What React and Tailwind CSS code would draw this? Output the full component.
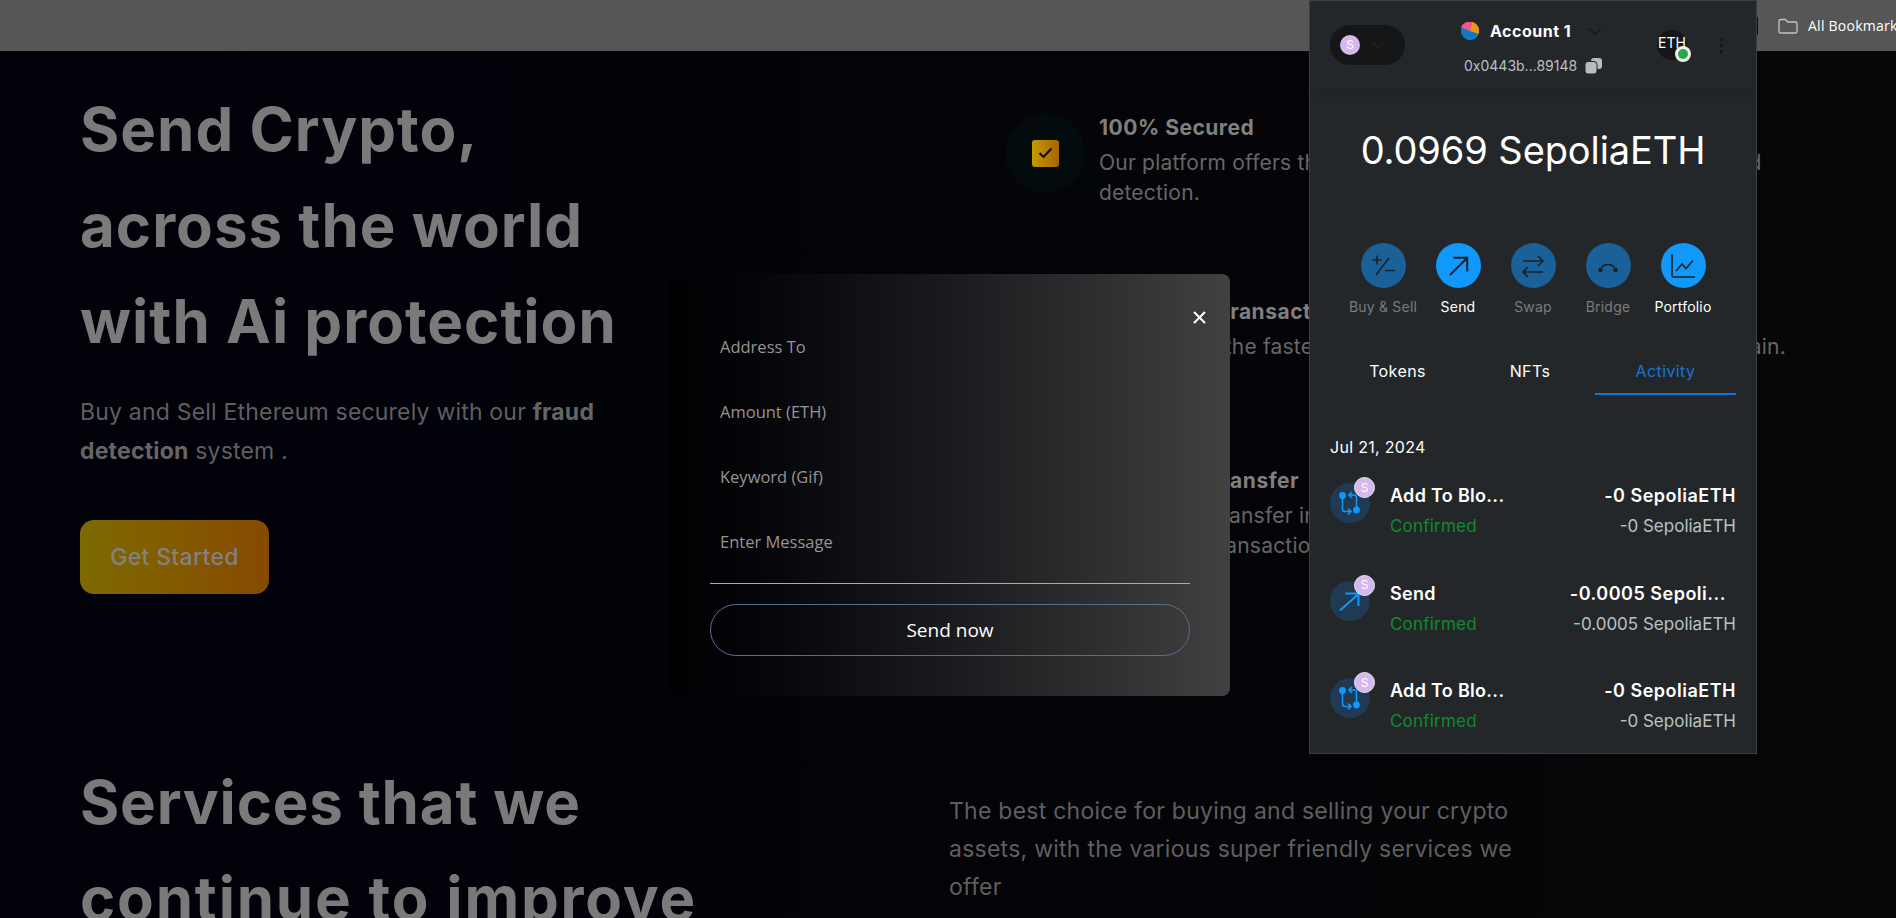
import React from "react";

const Chevron = ({ color, size = 16 }) => (
  <svg width={size} height={size} viewBox="0 0 16 16" fill="none" stroke={color} strokeWidth="1.3">
    <path d="M2 5l6 6 6-6" />
  </svg>
);

const ActionIcon = ({ kind }) => {
  const s = { fill: "none", stroke: "#1c2124", strokeWidth: 1.6 };
  return (
    <svg width="26" height="26" viewBox="0 0 26 26">
      {kind === "buy" && (
        <g {...s}>
          <path d="M2.500 7h9M7 2.500v9M6 22L19 5M15 17.500h10" />
        </g>
      )}
      {kind === "send" && (
        <g {...s} strokeWidth="2">
          <path d="M5 22L22 5M8.500 4.800H22.200V18.500" />
        </g>
      )}
      {kind === "swap" && (
        <g {...s}>
          <path d="M3 8h20M18 3l5 5-5 5M23 19H3M8 14l-5 5 5 5" />
        </g>
      )}
      {kind === "bridge" && (
        <g>
          <path d="M6.500 14.500a7.500 6 0 0 1 13 0" {...s} />
          <circle cx="5.500" cy="17" r="2.300" fill="#1c2124" />
          <circle cx="20.500" cy="17" r="2.300" fill="#1c2124" />
        </g>
      )}
      {kind === "chart" && (
        <g {...s}>
          <path d="M2 1v21.500a1.500 1.500 0 0 0 1.500 1.500H25M6 18l6-7 4 4.500 7-8" />
        </g>
      )}
    </svg>
  );
};

const ContractIcon = () => (
  <svg width="24" height="24" viewBox="0 0 24 24" fill="none" stroke="#1098fc" strokeWidth="1.600">
    <circle cx="4.500" cy="4.500" r="2.600" fill="#1098fc" />
    <circle cx="18.500" cy="19" r="2.600" fill="#1098fc" />
    <path d="M4.500 6v12a2.500 2.500 0 0 0 2.500 2.500h5M10 17.500l3 3-3 3M18.500 17V6.500a2.500 2.500 0 0 0-2.500-2.500h-5M14 1l-3 3 3 3" />
  </svg>
);

const SendIcon = () => (
  <svg width="24" height="24" viewBox="0 0 24 24" fill="none" stroke="#1098fc" strokeWidth="2">
    <path d="M2 21.500L20.500 5M7.500 4.500H20.500V17" />
  </svg>
);

const actions = [
  { kind: "buy", label: "Buy & Sell", on: false },
  { kind: "send", label: "Send", on: true },
  { kind: "swap", label: "Swap", on: false },
  { kind: "bridge", label: "Bridge", on: false },
  { kind: "chart", label: "Portfolio", on: true },
];

const activity = [
  { title: "Add To Blo...", amount: "-0 SepoliaETH", sub: "-0 SepoliaETH", icon: <ContractIcon />, pad: "" },
  { title: "Send", amount: "-0.0005 Sepoli...", sub: "-0.0005 SepoliaETH", icon: <SendIcon />, pad: "pr-[10px]" },
  { title: "Add To Blo...", amount: "-0 SepoliaETH", sub: "-0 SepoliaETH", icon: <ContractIcon />, pad: "" },
];

const Feature = ({ title, children }) => (
  <div className="flex gap-[14px]">
    <div className="w-[80px] h-[80px] shrink-0 rounded-full bg-[#040b0c] flex items-center justify-center">
      <div className="w-[27px] h-[27px] rounded-[3px] bg-gradient-to-r from-[#c39b00] to-[#a86400] flex items-center justify-center">
        <svg width="15" height="12" viewBox="0 0 15 12" fill="none" stroke="#14110a" strokeWidth="2.200">
          <path d="M1.500 6l4 4 8-8.500" />
        </svg>
      </div>
    </div>
    <div className="leading-[30px] whitespace-nowrap">
      <div className="text-[21px] font-bold tracking-[0.5px] text-[#808080] mb-[5px]">{title}</div>
      <div className="text-[21px] tracking-[0.2px] text-[#666666] font-normal">{children}</div>
    </div>
  </div>
);

export default function App() {
  return (
    <div className="relative w-[1896px] h-[918px] overflow-hidden bg-gradient-to-r from-[#01010a] to-[#080707] font-['Inter',sans-serif]">
      <div className="h-[51px] bg-[#565656] flex items-center justify-end overflow-hidden">
        <div className="w-[2px] h-[18px] bg-[#0c0c0c] mr-[20px]" />
        <svg width="20" height="16" viewBox="0 0 20 16" fill="none" stroke="#c4c4c4" strokeWidth="1.300" className="shrink-0">
          <path d="M1 3a1.500 1.500 0 0 1 1.500-1.500h5l2 2.500h8A1.500 1.500 0 0 1 19 5.500v8a1.500 1.500 0 0 1-1.500 1.500h-15A1.500 1.500 0 0 1 1 13.500z" />
        </svg>
        <div className="ml-[10px] w-[88px] overflow-hidden whitespace-nowrap text-[14px] tracking-[0.25px] text-white font-['Open_Sans',sans-serif]">All Bookmarks</div>
      </div>

      <main className="pl-[80px] pt-[30px]">
        <section className="flex">
          <div className="w-[925px] shrink-0">
            <h1 className="text-[60px] leading-[96px] font-bold text-[#7a7a7a] tracking-[1px]">
              Send Crypto,
              <br />
              across the world
              <br />
              with Ai protection
            </h1>
            <p className="mt-[24px] text-[23px] leading-[39px] text-[#5f5f5f] tracking-[0.2px]">
              Buy and Sell Ethereum securely with our <strong className="font-bold text-[#656565]">fraud</strong>
              <br />
              <strong className="font-bold text-[#656565]">detection</strong> system .
            </p>
            <button className="mt-[49px] w-[189px] h-[74px] rounded-[14px] bg-gradient-to-r from-[#7d6a00] to-[#864900] text-[23px] font-medium tracking-[0.3px] text-[#828282]">
              Get Started
            </button>
          </div>
          <div className="pt-[32px] flex flex-col gap-[89px]">
            <Feature title="100% Secured">
              Our platform offers the highest level of safety with AI based fraud
              <br />
              detection.
            </Feature>
            <Feature title="Immediate Transactions">We promise the fastest transaction speeds on Ethereum blockchain.</Feature>
            <Feature title="Seamless Transfer">
              Borderless transfer in minutes
              <br />
              with every transaction
            </Feature>
          </div>
        </section>

        <section className="flex mt-[160px]">
          <h2 className="w-[869px] shrink-0 text-[60px] leading-[96px] font-bold text-[#7a7a7a] tracking-[0.8px] whitespace-nowrap">
            Services that we
            <br />
            <span className="tracking-[1.8px]">continue to improve</span>
          </h2>
          <p className="mt-[38px] text-[23px] leading-[38px] tracking-[0.25px] text-[#5f5f5f] whitespace-nowrap">
            The best choice for buying and selling your crypto
            <br />
            assets, with the various super friendly services we
            <br />
            offer
          </p>
        </section>
      </main>

      {/* Transaction modal */}
      <div className="absolute left-[668px] top-[274px] w-[562px] h-[422px] rounded-[8px] bg-gradient-to-r from-[#010103] to-[#414141] pl-[42px] pr-[40px] font-['Open_Sans',sans-serif]">
        <svg className="absolute left-[525px] top-[37px]" width="13" height="13" viewBox="0 0 13 13" fill="none" stroke="#ffffff" strokeWidth="2">
          <path d="M1 1l11 11M12 1L1 12" />
        </svg>
        <div className="pt-[58px] flex flex-col gap-[35px] text-[16.5px] leading-[30px] text-[#959595] font-normal pl-[10px]">
          <div>Address To</div>
          <div>Amount (ETH)</div>
          <div>Keyword (Gif)</div>
          <div>Enter Message</div>
        </div>
        <div className="mt-[26px] h-px bg-[#e0ad1d]" />
        <button className="mt-[20px] w-full h-[52px] rounded-full border border-[#5e6a94] text-white text-[19px]">Send now</button>
      </div>

      {/* Wallet extension popup */}
      <div className="absolute left-[1309px] top-0 w-[448px] h-[754px] bg-[#24272a] border border-[#3b3f42] overflow-hidden font-['Inter',sans-serif]">
        <header className="h-[88px] flex items-center pl-[20px] shadow-[0_2px_12px_rgba(0,0,0,0.18)]">
          <div className="w-[75px] h-[40px] rounded-full bg-[#141618] flex items-center pl-[10px] gap-[10px] shrink-0">
            <div className="w-[20px] h-[20px] rounded-full bg-[#d4b8ee] flex items-center justify-center text-[12px] text-white">S</div>
            <Chevron color="#1f2225" />
          </div>
          <div className="ml-[56px] w-[142px] shrink-0">
            <div className="flex items-center h-[24px] mt-[4px]">
              <svg width="18" height="18" viewBox="0 0 18 18" className="shrink-0">
                <circle cx="9" cy="9" r="9" fill="#0f7ac4" />
                <path d="M9 9L0 5.500A9 9 0 0 1 11 0z" fill="#f0568f" />
                <path d="M9 9L11 0a9 9 0 0 1 6.500 12z" fill="#f6910f" />
                <path d="M0 7.500L17.500 12A9 9 0 0 1 9 18 9 9 0 0 1 0 9z" fill="#0f7ac4" />
              </svg>
              <span className="ml-[11px] text-[16px] font-bold tracking-[0.5px] text-white whitespace-nowrap">Account 1</span>
              <span className="ml-[16px]">
                <Chevron color="#141618" />
              </span>
            </div>
            <div className="flex items-center mt-[14px] ml-[3px] h-[18px]">
              <span className="text-[14px] leading-[18px] text-[#bbc0c5] whitespace-nowrap">0x0443b...89148</span>
              <svg className="ml-[8px] shrink-0" width="17" height="16" viewBox="0 0 17 16" fill="#b8bcc0">
                <rect x="6" y="0" width="11" height="11" rx="3" />
                <rect x="0" y="3.500" width="12" height="12.500" rx="3" stroke="#24272a" strokeWidth="1" />
              </svg>
            </div>
          </div>
          <div className="relative ml-[54px] w-[30px] h-[30px] pb-[5px] rounded-full bg-[#141618] flex items-center justify-center shrink-0 text-[14px] text-white">
            ETH
            <div className="absolute left-[18px] top-[16px] w-[16px] h-[16px] rounded-full bg-[#eef0f0] flex items-center justify-center">
              <div className="w-[10px] h-[10px] rounded-full bg-[#28a745]" />
            </div>
          </div>
          <div className="ml-[33px] flex flex-col gap-[3px]">
            <div className="w-[3px] h-[3px] rounded-full bg-[#101214]" />
            <div className="w-[3px] h-[3px] rounded-full bg-[#101214]" />
            <div className="w-[3px] h-[3px] rounded-full bg-[#101214]" />
          </div>
        </header>

        <div className="pt-[37px] text-center text-[38px] leading-[48px] tracking-[-0.1px] text-white whitespace-nowrap font-normal">0.0969 SepoliaETH</div>

        <div className="mt-[69px] flex justify-center">
          {actions.map((a) => (
            <div key={a.label} className="w-[75px] flex flex-col items-center">
              <div className={`w-[45px] h-[45px] rounded-full flex items-center justify-center ${a.on ? "bg-[#1098fc]" : "bg-[#1a6199]"}`}>
                <ActionIcon kind={a.kind} />
              </div>
              <div className={`mt-[9px] text-[14px] leading-[20px] tracking-[0.2px] whitespace-nowrap ${a.on ? "text-white" : "text-[#797c80]"}`}>{a.label}</div>
            </div>
          ))}
        </div>

        <div className="mt-[30px] px-[20px] flex text-[16px] leading-[24px] tracking-[0.4px] text-white">
          <div className="w-[135px] text-center pt-[12px] pb-[10px]">Tokens</div>
          <div className="w-[130px] text-center pt-[12px] pb-[10px]">NFTs</div>
          <div className="w-[141px] text-center pt-[12px] pb-[10px] text-[#1276d6] border-b-2 border-[#1276d6]">Activity</div>
        </div>

        <div className="mt-[40px] ml-[20px] text-[16px] leading-[24px] tracking-[0.3px] text-white">Jul 21, 2024</div>

        <div className="mt-[24px] px-[20px]">
          {activity.map((row, i) => (
            <div key={i} className="flex h-[97.500px]">
              <div className="relative w-[40px] h-[40px] rounded-full bg-[#1f3a52] flex items-center justify-center shrink-0">
                {row.icon}
                <div className="absolute left-[24px] top-[-6px] w-[21px] h-[21px] rounded-full bg-[#d4b8ee] border border-[#e4e6e8] flex items-center justify-center text-[12px] text-white">S</div>
              </div>
              <div className="ml-[20px] mt-[1px] leading-[24px] flex-1 flex justify-between">
                <div>
                  <div className="text-[18px] font-semibold tracking-[0.3px] text-white">{row.title}</div>
                  <div className="mt-[6px] text-[17px] tracking-[0.2px] text-[#108a2c]">Confirmed</div>
                </div>
                <div className="flex flex-col items-end">
                  <div className={`text-[18px] font-semibold tracking-[0.5px] text-white ${row.pad}`}>{row.amount}</div>
                  <div className="mt-[6px] text-[17px] text-[#bbc0c5]">{row.sub}</div>
                </div>
              </div>
            </div>
          ))}
        </div>
      </div>
    </div>
  );
}
